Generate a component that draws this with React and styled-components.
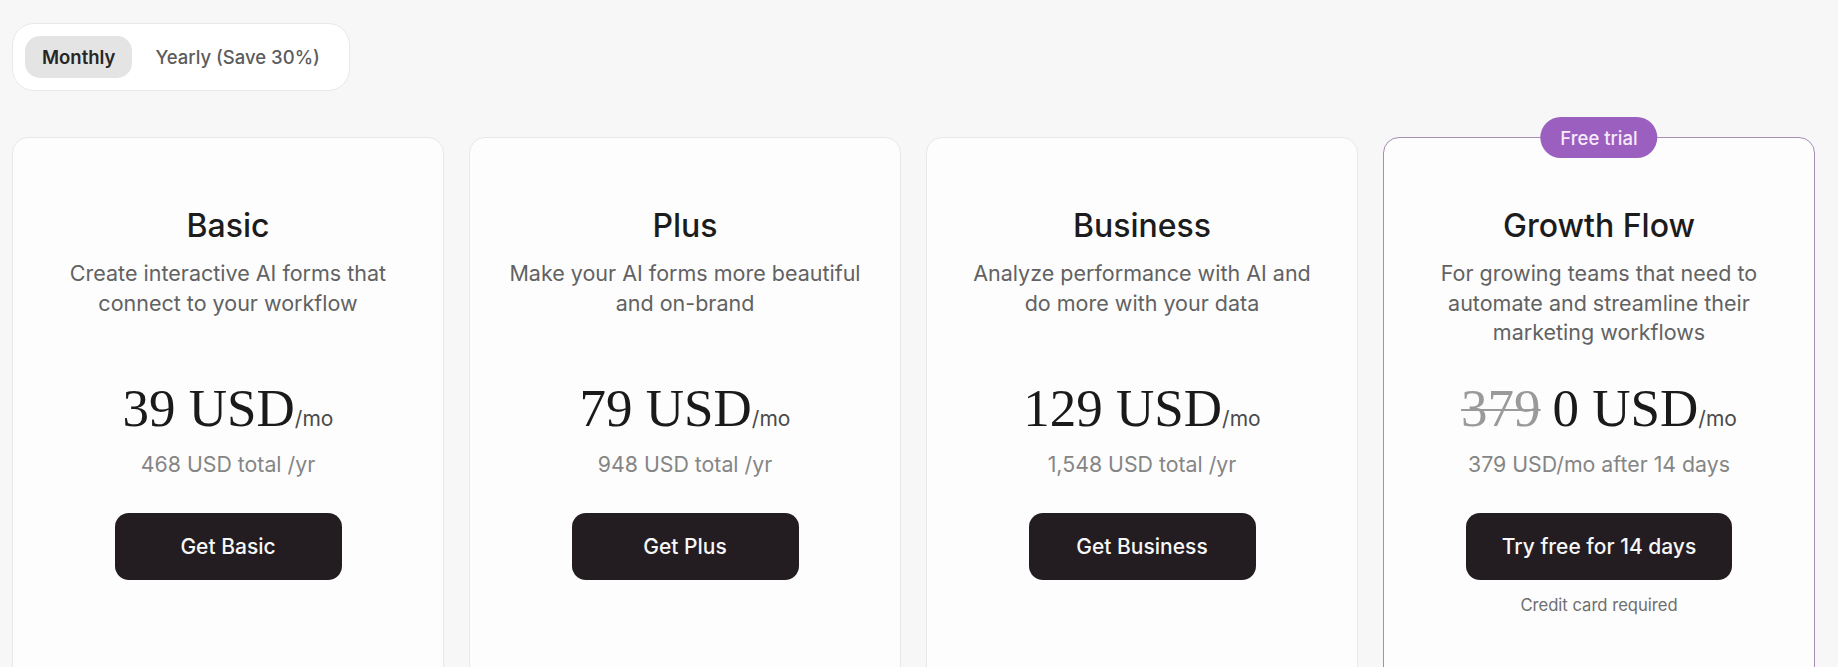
import React, { useState } from "react";
import styled, { createGlobalStyle } from "styled-components";

const GlobalStyle = createGlobalStyle`
  html, body { margin: 0; padding: 0; background: #f7f7f8; }
  body { font-family: Inter, "Noto Sans", "Liberation Sans", sans-serif; -webkit-font-smoothing: antialiased; }
  * { box-sizing: border-box; }
`;

const Page = styled.div`
  padding: 23px 0 0 12px;
  display: flex;
  flex-direction: column;
  align-items: flex-start;
  gap: 46px;
  height: 667px;
  overflow: hidden;
`;

const Toggle = styled.div`
  display: flex;
  align-items: center;
  gap: 6px;
  padding: 12px;
  background: #ffffff;
  border: 1px solid #e9e9ec;
  border-radius: 22px;
`;

const ToggleButton = styled.button`
  border: 0;
  font-family: inherit;
  font-size: 18.5px;
  font-weight: ${(p) => (p.$active ? 600 : 500)};
  color: ${(p) => (p.$active ? "#262626" : "#5c5c5c")};
  background: ${(p) => (p.$active ? "#e4e4e4" : "transparent")};
  height: 42px;
  padding: 0 17px;
  border-radius: 15px;
  cursor: pointer;
`;

const Grid = styled.div`
  display: grid;
  grid-template-columns: repeat(4, 432px);
  column-gap: 25px;
`;

const Card = styled.div`
  position: relative;
  height: 620px;
  background: #fdfdfd;
  border: ${(p) => (p.$featured ? "1.5px solid #a78db2" : "1px solid #e8e8ea")};
  border-radius: 16px;
  padding: 70px 24px 0;
  display: flex;
  flex-direction: column;
  align-items: center;
  text-align: center;
`;

const Badge = styled.div`
  position: absolute;
  top: -21px;
  left: 50%;
  transform: translateX(-50%);
  height: 41px;
  padding: 0 20px;
  display: flex;
  align-items: center;
  border-radius: 21px;
  background: #9b5fbf;
  color: #f6eafb;
  font-size: 18.5px;
  font-weight: 500;
  white-space: nowrap;
`;

const Title = styled.h2`
  margin: 0;
  font-size: 32px;
  line-height: 36px;
  font-weight: 500;
  color: #1c1c1c;
`;

const Description = styled.p`
  margin: 15px 0 0;
  min-height: 89px;
  font-size: 21.5px;
  line-height: 29.5px;
  color: #626262;
  white-space: nowrap;
`;

const PriceRow = styled.div`
  margin-top: 34px;
  display: flex;
  align-items: baseline;
  justify-content: center;
  gap: 12px;
  line-height: 52px;
`;

const Price = styled.span`
  font-family: "Liberation Serif", "Times New Roman", serif;
  font-size: 53px;
  color: ${(p) => (p.$old ? "#9a9a9a" : "#1a1a1a")};
  text-decoration: ${(p) => (p.$old ? "line-through" : "none")};
  text-decoration-thickness: 2px;
  text-decoration-color: #9a9a9a;
`;

const Per = styled.span`
  font-size: 21px;
  color: #4a4a4a;
  margin-left: -12px;
`;

const Sub = styled.div`
  margin-top: 4px;
  font-size: 21.3px;
  line-height: 30px;
  color: #858585;
`;

const CTA = styled.button`
  margin-top: 34px;
  min-width: 227px;
  height: 67px;
  padding: 0 36px;
  border: 0;
  border-radius: 14px;
  background: #231d22;
  color: #f7f7f7;
  font-family: inherit;
  font-size: 21px;
  font-weight: 500;
  cursor: pointer;
`;

const Note = styled.div`
  margin-top: 13px;
  font-size: 16.6px;
  line-height: 24px;
  color: #6f6f6f;
`;

const plans = [
  {
    name: "Basic",
    desc: ["Create interactive AI forms that", "connect to your workflow"],
    price: "39",
    sub: "468 USD total /yr",
    cta: "Get Basic",
  },
  {
    name: "Plus",
    desc: ["Make your AI forms more beautiful", "and on-brand"],
    price: "79",
    sub: "948 USD total /yr",
    cta: "Get Plus",
  },
  {
    name: "Business",
    desc: ["Analyze performance with AI and", "do more with your data"],
    price: "129",
    sub: "1,548 USD total /yr",
    cta: "Get Business",
  },
  {
    name: "Growth Flow",
    desc: ["For growing teams that need to", "automate and streamline their", "marketing workflows"],
    oldPrice: "379",
    price: "0",
    sub: "379 USD/mo after 14 days",
    cta: "Try free for 14 days",
    note: "Credit card required",
    badge: "Free trial",
  },
];

export default function App() {
  const [period, setPeriod] = useState("monthly");
  return (
    <>
      <GlobalStyle />
      <Page>
        <Toggle>
          <ToggleButton $active={period === "monthly"} onClick={() => setPeriod("monthly")}>
            Monthly
          </ToggleButton>
          <ToggleButton $active={period === "yearly"} onClick={() => setPeriod("yearly")}>
            Yearly (Save 30%)
          </ToggleButton>
        </Toggle>
        <Grid>
          {plans.map((p) => (
            <Card key={p.name} $featured={!!p.badge}>
              {p.badge && <Badge>{p.badge}</Badge>}
              <Title>{p.name}</Title>
              <Description>
                {p.desc.map((line, i) => (
                  <React.Fragment key={i}>
                    {i > 0 && <br />}
                    {line}
                  </React.Fragment>
                ))}
              </Description>
              <PriceRow>
                {p.oldPrice && <Price $old>{p.oldPrice}</Price>}
                <Price>{p.price} USD</Price>
                <Per>/mo</Per>
              </PriceRow>
              <Sub>{p.sub}</Sub>
              <CTA>{p.cta}</CTA>
              {p.note && <Note>{p.note}</Note>}
            </Card>
          ))}
        </Grid>
      </Page>
    </>
  );
}
